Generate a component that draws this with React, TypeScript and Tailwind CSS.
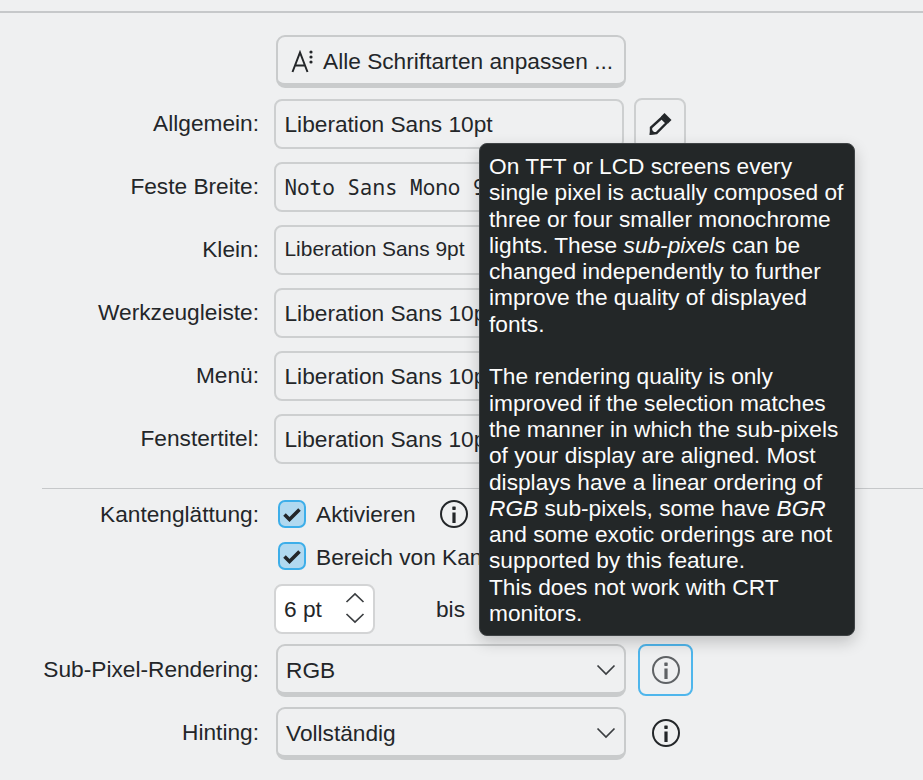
import React from "react";

const inputCls =
  "w-[350px] h-[50px] ml-[15px] flex items-center px-[8.5px] border-2 border-[#cdcfd0] rounded-[8px] bg-[#eff0f1] whitespace-nowrap overflow-hidden";
const buttonCls =
  "w-[350px] h-[53px] ml-[17px] flex items-center border-2 border-b-[5px] border-[#c9cbcc] rounded-[9px] bg-[#eff0f1] whitespace-nowrap";

function Label({ children }: { children: React.ReactNode }) {
  return <div className="w-[259px] shrink-0 mb-[2px] text-right whitespace-nowrap">{children}</div>;
}

function PencilIcon() {
  return (
    <svg width="24" height="24" viewBox="0 0 24 24" fill="none">
      <path d="M16.5 1 23.5 8 20 11.5 13 4.5z" fill="#232629" />
      <path d="M13.5 6 18.5 11 8.5 21 3 21.5 3 15.5z" stroke="#232629" strokeWidth="2.4" strokeLinejoin="miter" />
      <path d="M1.5 23 2.5 16.5 8 22z" fill="#232629" />
    </svg>
  );
}

function InfoIcon({ color = "#232629" }: { color?: string }) {
  return (
    <svg width="30" height="30" viewBox="0 0 30 30" fill="none">
      <circle cx="15" cy="15" r="13" stroke={color} strokeWidth="2" />
      <rect x="13.3" y="7.5" width="3.4" height="3.4" rx="0.6" fill={color} />
      <rect x="13.4" y="13.5" width="3.2" height="10.5" fill={color} />
    </svg>
  );
}

function Check() {
  return (
    <div className="w-[28px] h-[28px] shrink-0 flex items-center justify-center rounded-[7px] border-2 border-[#3daee9] bg-[#b1d9f0]">
      <svg width="20" height="20" viewBox="0 0 20 20" fill="none">
        <path d="M2.5 10.5 7.5 15.5 17.5 5.5" stroke="#232629" strokeWidth="3.6" />
      </svg>
    </div>
  );
}

function Chevron() {
  return (
    <svg width="20" height="12" viewBox="0 0 20 12" fill="none" className="mt-[2px]">
      <path d="M1.5 1.5 10 10l8.5-8.5" stroke="#3b3e41" strokeWidth="1.7" />
    </svg>
  );
}

function FontRow({ label, value, cls }: { label: string; value: string; cls?: string }) {
  return (
    <div className="flex items-center h-[50px] mt-[13px]">
      <Label>{label}</Label>
      <div className={inputCls + " " + (cls ?? "")}>{value}</div>
    </div>
  );
}

function Combo({ value }: { value: string }) {
  return (
    <div className={buttonCls + " justify-between pl-[8px] pr-[8px]"}>
      <span className="mt-[2px]">{value}</span>
      <Chevron />
    </div>
  );
}

export default function App() {
  return (
    <div
      className="relative w-[923px] h-[780px] overflow-hidden bg-[#eff0f1] text-[#232629] text-[22.7px]"
      style={{ fontFamily: '"Liberation Sans", Arial, sans-serif' }}
    >
      <div className="mt-[11px] h-[2px] bg-[#c6c8ca]" />

      <div className="flex items-center h-[53px] mt-[22px]">
        <div className="w-[259px] shrink-0" />
        <div className={buttonCls + " pl-[13px] gap-[8px]"}>
          <svg width="24" height="24" viewBox="0 0 24 24" fill="none" className="mt-[4px]">
            <path d="M1.5 22 9 2.5 16.5 22M4.5 15.5H13.5" stroke="#232629" strokeWidth="2" />
            <circle cx="20" cy="2" r="1.6" fill="#232629" />
            <circle cx="20" cy="7" r="1.6" fill="#232629" />
            <circle cx="20" cy="12" r="1.6" fill="#232629" />
          </svg>
          <span className="mt-[2px]">Alle Schriftarten anpassen ...</span>
        </div>
      </div>

      <div className="flex items-center h-[50px] mt-[11px]">
        <Label>Allgemein:</Label>
        <div className={inputCls}>Liberation Sans 10pt</div>
        <div className="w-[52px] h-[52px] ml-[10px] flex items-center justify-center border-2 border-[#cdcfd0] rounded-[8px]">
          <PencilIcon />
        </div>
      </div>
      <FontRow
        label="Feste Breite:"
        value="Noto Sans Mono 9pt"
        cls="pt-[2px] text-[20.95px] [font-family:'Noto_Sans_Mono','DejaVu_Sans_Mono',monospace]"
      />
      <FontRow label="Klein:" value="Liberation Sans 9pt" cls="pb-[2px] text-[20.9px]" />
      <FontRow label="Werkzeugleiste:" value="Liberation Sans 10pt" />
      <FontRow label="Menü:" value="Liberation Sans 10pt" />
      <FontRow label="Fenstertitel:" value="Liberation Sans 10pt" />

      <div className="ml-[42px] mt-[24px] h-[1px] bg-[#c6c8ca]" />

      <div className="flex items-center h-[42px] mt-[4px]">
        <div className="w-[259px] shrink-0 text-right whitespace-nowrap">Kantenglättung:</div>
        <div className="ml-[19px] flex items-center">
          <Check />
          <span className="ml-[10px]">Aktivieren</span>
          <div className="ml-[23px]">
            <InfoIcon />
          </div>
        </div>
      </div>
      <div className="flex items-center h-[43px]">
        <div className="w-[259px] shrink-0" />
        <div className="ml-[19px] flex items-center whitespace-nowrap">
          <Check />
          <span className="ml-[10px] mt-[2px]">Bereich von Kanten</span>
        </div>
      </div>
      <div className="flex items-center h-[50px] mt-[6px]">
        <div className="w-[259px] shrink-0" />
        <div className="w-[101px] h-[50px] ml-[15px] flex items-center justify-between pl-[8px] pr-[8px] bg-white border-2 border-[#d3d4d5] rounded-[8px]">
          <span>6 pt</span>
          <svg width="20" height="34" viewBox="0 0 20 34" fill="none">
            <path d="M1.5 10 10 2l8.5 8M1.5 22l8.5 8 8.5-8" stroke="#3b3e41" strokeWidth="1.7" />
          </svg>
        </div>
        <span className="ml-[61px]">bis</span>
      </div>

      <div className="flex items-center h-[53px] mt-[10px]">
        <Label>Sub-Pixel-Rendering:</Label>
        <Combo value="RGB" />
        <div className="w-[55px] h-[52px] ml-[12px] self-start flex items-center justify-center border-2 border-[#4fb6ec] rounded-[8px]">
          <InfoIcon color="#5f6265" />
        </div>
      </div>
      <div className="flex items-center h-[53px] mt-[10px]">
        <Label>Hinting:</Label>
        <Combo value="Vollständig" />
        <div className="w-[55px] h-[52px] ml-[12px] self-start flex items-center justify-center">
          <InfoIcon />
        </div>
      </div>

      <div className="absolute left-[479px] top-[143px] w-[376px] h-[493px] px-[9px] pt-[9px] bg-[#232728] border border-[#3f4345] rounded-[8px] text-[#fcfcfc] leading-[26.3px] shadow-[0_6px_16px_rgba(0,0,0,0.2)]">
        <p>
          On TFT or LCD screens every single pixel is actually composed of three or four smaller monochrome lights.
          These <i>sub-pixels</i> can be changed independently to further improve the quality of displayed fonts.
        </p>
        <p className="mt-[26.3px]">
          The rendering quality is only improved if the selection matches the manner in which the sub-pixels of your
          display are aligned. Most displays have a linear ordering of <i>RGB</i> sub-pixels, some have <i>BGR</i> and
          some exotic orderings are not supported by this feature.
          <br />
          This does not work with CRT monitors.
        </p>
      </div>
    </div>
  );
}
